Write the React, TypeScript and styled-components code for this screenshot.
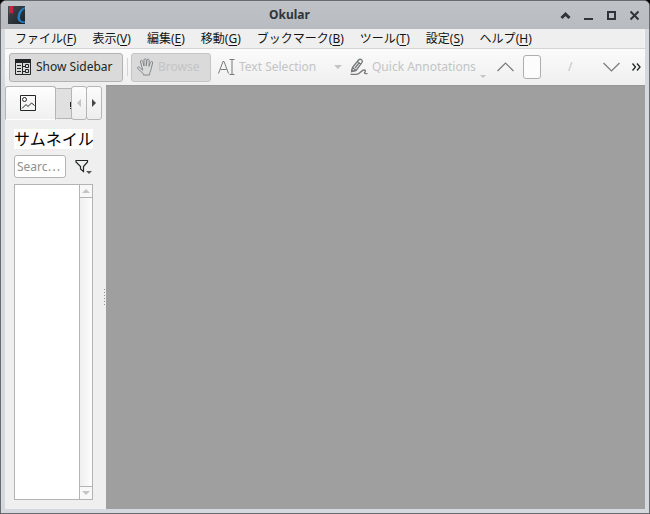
import React from "react";
import styled, { createGlobalStyle, css } from "styled-components";

const Global = createGlobalStyle`
  *, *::before, *::after { box-sizing: border-box; }
  body { margin: 0; background: #000; }
  button, input { font: inherit; color: inherit; margin: 0; padding: 0; }
  svg { display: block; flex: none; }
`;

const Window = styled.div`
  display: flex;
  flex-direction: column;
  min-height: 100vh;
  border: 1px solid #686b70;
  border-radius: 6px 6px 0 0;
  background: #d5d9de;
  overflow: hidden;
  font: 12px/16px "Noto Sans", "Noto Sans CJK JP", sans-serif;
  color: #232627;
`;

const TitleBar = styled.header`
  display: flex;
  align-items: center;
  height: 28px;
  padding: 0 3px 0 7px;
  background: linear-gradient(#bfc3c7, #b8bcc0);
`;

const Title = styled.h1`
  flex: 1;
  margin: 0;
  font-size: 12px;
  line-height: 16px;
  font-weight: 700;
  text-align: center;
  color: #2f343b;
`;

const WindowControls = styled.div`
  display: flex;
  justify-content: flex-end;
`;

const BareButton = styled.button`
  display: flex;
  align-items: center;
  justify-content: center;
  flex: none;
  border: 0;
  background: none;
`;

const ControlButton = styled(BareButton)`
  width: 23px;
  height: 24px;
`;

const Body = styled.div`
  display: flex;
  flex-direction: column;
  flex: 1;
  margin: 0 4px 4px;
  background: #efefef;
`;

const MenuBar = styled.nav`
  display: flex;
  height: 20px;
  padding: 0 2px;
  border-bottom: 1px solid #d4d4d4;
  white-space: nowrap;
`;

const MenuItem = styled(BareButton)`
  height: 19px;
  padding: 0 8px;
  color: #141414;

  u { text-underline-offset: 2px; }
`;

const Toolbar = styled.div`
  display: flex;
  align-items: center;
  height: 36px;
  padding: 0 4px;
  background: linear-gradient(#fbfbfb, #efefef);
  white-space: nowrap;
`;

const ToolButton = styled.button<{ $raised?: boolean }>`
  display: flex;
  align-items: center;
  flex: none;
  gap: 4px;
  height: 29px;
  padding: 0 5px;
  border: 1px solid transparent;
  border-radius: 3px;
  background: none;

  &:disabled { color: #c3c4c5; }

  ${(p) => p.$raised && css`
    border-color: #b3b3b3;
    background: #dadada;
    &:disabled { border-color: #c4c4c4; }
  `}
`;

const SidebarToggle = styled(ToolButton)`
  width: 114px;
`;

const BrowseButton = styled(ToolButton)`
  width: 80px;
`;

const SelectionButton = styled(ToolButton)`
  width: 120px;
  margin-left: 1px;
`;

const DropButton = styled(BareButton)`
  width: 12px;
  height: 29px;
`;

const AnnotationButton = styled(ToolButton)`
  width: 142px;
  margin-right: 11px;

  svg:last-child { align-self: flex-end; margin-bottom: 3px; }
`;

const Separator = styled.div`
  width: 1px;
  height: 18px;
  margin: 0 3px 0 4px;
  background: #d4d4d4;
`;

const PageInput = styled.input`
  width: 18px;
  height: 24px;
  margin: 0 27px 0 9px;
  border: 1px solid #adadad;
  border-radius: 3px;
  background: #fcfcfc;
`;

const PageDivider = styled.span`
  margin-right: 31px;
  color: #c3c4c5;
`;

const MoreButton = styled(BareButton)`
  width: 10px;
  height: 24px;
  margin-left: auto;
`;

const Main = styled.div`
  display: flex;
  flex: 1;
`;

const Sidebar = styled.aside`
  display: flex;
  flex-direction: column;
  flex: none;
  width: 98px;
`;

const Tabs = styled.div`
  display: flex;
  align-items: flex-start;
  height: 35px;
  padding-top: 1px;
`;

const Tab = styled.button<{ $active?: boolean }>`
  display: flex;
  align-items: center;
  justify-content: ${(p) => (p.$active ? "flex-start" : "flex-end")};
  flex: none;
  width: ${(p) => (p.$active ? 51 : 16)}px;
  height: ${(p) => (p.$active ? 34 : 31)}px;
  margin-top: ${(p) => (p.$active ? 0 : 2)}px;
  padding-left: ${(p) => (p.$active ? 14 : 0)}px;
  border: 1px solid #b5b5b5;
  border-bottom-color: ${(p) => (p.$active ? "transparent" : "#b5b5b5")};
  border-left-color: ${(p) => (p.$active ? "#b5b5b5" : "transparent")};
  border-right-width: ${(p) => (p.$active ? 1 : 0)}px;
  border-radius: ${(p) => (p.$active ? "3px 3px 0 0" : "0")};
  background: ${(p) => (p.$active ? "linear-gradient(#fefefe, #f0f0f0)" : "#e0e0e0")};
  overflow: hidden;
`;

const TabScroll = styled(BareButton)`
  width: 16px;
  height: 34px;
  margin-left: -1px;
  border: 1px solid #b5b5b5;
  border-radius: 3px;
  background: linear-gradient(#fcfcfc, #ededed);
`;

const Panel = styled.div`
  display: flex;
  flex-direction: column;
  flex: 1;
  padding: 9px 10px 9px 9px;
`;

const PanelTitle = styled.h2`
  margin: 0 0 6px;
  background: #fff;
  color: #000;
  font-size: 16px;
  line-height: 20px;
  font-weight: 400;
  white-space: nowrap;
`;

const SearchRow = styled.div`
  display: flex;
  align-items: center;
  margin-bottom: 6px;
`;

const SearchInput = styled.input`
  flex: 1;
  min-width: 0;
  height: 23px;
  padding: 0 2px;
  border: 1px solid #b3b3b3;
  border-radius: 3px;
  background: #fff;

  &::placeholder { color: #8f9091; opacity: 1; }
`;

const FilterButton = styled(BareButton)`
  width: 27px;
  height: 23px;
  padding-left: 8px;
`;

const ListFrame = styled.div`
  display: flex;
  flex: 1;
  border: 1px solid #b3b3b3;
  background: #fff;
`;

const ScrollTrack = styled.div`
  display: flex;
  flex-direction: column;
  justify-content: space-between;
  width: 13px;
  margin-left: auto;
  border-left: 1px solid #b3b3b3;
  background: linear-gradient(90deg, #efefef, #fdfdfd);
`;

const ScrollButton = styled(BareButton)<{ $down?: boolean }>`
  width: 12px;
  height: 13px;
  border: 0 solid #b3b3b3;
  border-width: ${(p) => (p.$down ? "1px 0 0" : "0 0 1px")};
  background: #f8f8f8;
`;

const Splitter = styled.div`
  display: flex;
  flex-direction: column;
  align-items: center;
  justify-content: center;
  gap: 2px;
  flex: none;
  width: 3px;
  cursor: col-resize;
`;

const Dot = styled.i`
  width: 1px;
  height: 1px;
  background: #8f8f8f;
`;

const PageView = styled.main`
  flex: 1;
  border-top: 1px solid #979797;
  background: #9f9f9f;
`;

const menus = [
  ["ファイル", "F"],
  ["表示", "V"],
  ["編集", "E"],
  ["移動", "G"],
  ["ブックマーク", "B"],
  ["ツール", "T"],
  ["設定", "S"],
  ["ヘルプ", "H"],
];

const AppIcon = () => (
  <svg width="17" height="18" viewBox="0 0 17 18" aria-hidden="true">
    <defs>
      <linearGradient id="cover" x2="1" y2="1">
        <stop stopColor="#424a50" />
        <stop offset="1" stopColor="#1b2024" />
      </linearGradient>
    </defs>
    <path fill="url(#cover)" d="M0 0h17v18H0z" />
    <path fill="#c82543" d="M1 0h4v8L3 6.500 1 8z" />
    <path fill="#2080cb" d="M17 1c-5 1.500-7.500 6.500-7.500 10.500 0 4 3 5.500 7.500 5.500v-1.500c-3 0-5-1-5-4 0-3.500 1.500-7 5-9z" />
  </svg>
);

const SidebarIcon = () => (
  <svg width="17" height="17" viewBox="0 0 17 17" fill="none" stroke="#232627" aria-hidden="true">
    <path fill="#232627" stroke="none" d="M0 0h16v4H0z" />
    <path d="M.5 3.500v12h15v-12M10.500 5.500h3v3h-3zM10.500 10.500h3v3h-3zM7.500 4v11M7.500 7.500h3M7.500 12.500h3" />
    <path d="M2 6.500h4M2 9.500h4M2 12.500h4" />
  </svg>
);

const HandIcon = () => (
  <svg width="17" height="18" viewBox="0 0 17 18" fill="none" stroke="#85888a" strokeLinecap="round" strokeLinejoin="round" aria-hidden="true">
    <path d="M5 9.500 3.500 4c-.4-2 1.700-2.300 2.200-.6L7 8V2.200C7 .2 9.200.2 9.300 2.200V8l.6-5.600c.2-1.900 2.400-1.600 2.300.2L12 8.300l1.500-4c.7-1.700 2.600-1 2.100.7L14 11.500c-.4 2-1.500 3-1.500 5.500H6.500c0-2.500-2.500-3-5.700-6.300-.9-1.200.6-2.500 1.700-1.400L5.500 12z" />
  </svg>
);

const TextSelectIcon = () => (
  <svg width="17" height="17" viewBox="0 0 17 17" fill="none" stroke="#777a7b" aria-hidden="true">
    <path d="M.5 14.500 5 2.500h1l4.500 12M2.500 10.500h6M11.500.5h5M11.500 15.500h5M14 .5v15" />
  </svg>
);

const PencilIcon = () => (
  <svg width="18" height="18" viewBox="0 0 18 18" fill="none" stroke="#777a7b" strokeWidth="1.300" strokeLinejoin="round" aria-hidden="true">
    <path d="M2.500 9.500 8.500 2q1.500-1.500 3-.2t.2 3L6 12.500l-4.500 1.200zM7.500 3.500l3.200 2.700M2.500 9.500 6 12.500M5 10l4-5" />
    <path fill="#777a7b" stroke="none" d="m1 11 4 2-4 1.500z" />
    <path d="M.5 16.300H6c4 0 5-4 8-4.300 2.500-.2 1 2.400.3 3 .7 1 1.700.8 3.200.6" />
  </svg>
);

const ImageIcon = () => (
  <svg width="16" height="16" viewBox="0 0 16 16" fill="none" stroke="#232627" aria-hidden="true">
    <path d="M.5.5h15v15H.5zM2 13.500l4-4 2 2 3.500-3.500 3 2.500" />
    <circle cx="4.500" cy="4.500" r="2" />
  </svg>
);

const FilterIcon = () => (
  <svg width="17" height="17" viewBox="0 0 17 17" fill="none" stroke="#232627" aria-hidden="true">
    <path strokeWidth="1.200" d="M1 2.500h11.500V4L8.500 8.500v5L5.500 11V8.500L1 4z" />
    <path fill="#555859" stroke="none" d="M11 13h6l-3 3z" />
  </svg>
);

const Chevron = ({ down }: { down?: boolean }) => (
  <svg width="17" height="10" viewBox="0 0 17 10" fill="none" stroke="#777a7b" strokeWidth="1.200" aria-hidden="true">
    <path d={down ? "m.5 1 8 8 8-8" : "m.5 9 8-8 8 8"} />
  </svg>
);

const Triangle = ({ d, fill, width, height }: { d: string; fill: string; width: number; height: number }) => (
  <svg width={width} height={height} viewBox={`0 0 ${width} ${height}`} fill={fill} aria-hidden="true">
    <path d={d} />
  </svg>
);

const controls = [
  { label: "Keep above", d: "m1.500 8 4-4 4 4", stroke: 3 },
  { label: "Minimize", d: "M1 9h9", stroke: 2 },
  { label: "Maximize", d: "M2 2h7v7H2z", stroke: 2 },
  { label: "Close", d: "m1.500 1.500 8 8M9.500 1.500l-8 8", stroke: 2 },
];

export default function App() {
  return (
    <>
      <Global />
      <Window>
        <TitleBar>
          <AppIcon />
          <Title>Okular</Title>
          <WindowControls>
            {controls.map(({ label, d, stroke }) => (
              <ControlButton key={label} aria-label={label}>
                <svg width="11" height="11" viewBox="0 0 11 11" fill="none" stroke="#2f343b" strokeWidth={stroke}>
                  <path d={d} />
                </svg>
              </ControlButton>
            ))}
          </WindowControls>
        </TitleBar>
        <Body>
          <MenuBar>
            {menus.map(([label, key]) => (
              <MenuItem key={key}>
                {label}(<u>{key}</u>)
              </MenuItem>
            ))}
          </MenuBar>
          <Toolbar role="toolbar">
            <SidebarToggle $raised aria-pressed="true">
              <SidebarIcon />
              Show Sidebar
            </SidebarToggle>
            <Separator />
            <BrowseButton $raised disabled>
              <HandIcon />
              Browse
            </BrowseButton>
            <SelectionButton disabled>
              <TextSelectIcon />
              Text Selection
            </SelectionButton>
            <DropButton disabled aria-label="Selection tools">
              <Triangle width={8} height={4} d="M0 0h8L4 4z" fill="#c3c4c5" />
            </DropButton>
            <AnnotationButton disabled>
              <PencilIcon />
              Quick Annotations
              <Triangle width={6} height={3} d="M0 0h6L3 3z" fill="#c3c4c5" />
            </AnnotationButton>
            <BareButton disabled aria-label="Previous page">
              <Chevron />
            </BareButton>
            <PageInput aria-label="Page" />
            <PageDivider>/</PageDivider>
            <BareButton disabled aria-label="Next page">
              <Chevron down />
            </BareButton>
            <MoreButton aria-label="More tools">
              <svg width="9" height="8" viewBox="0 0 9 8" fill="none" stroke="#232627" strokeWidth="1.300">
                <path d="m.5.500 3 3.500-3 3.500M5 .500 8 4 5 7.500" />
              </svg>
            </MoreButton>
          </Toolbar>
          <Main>
            <Sidebar>
              <Tabs>
                <Tab $active aria-label="Thumbnails">
                  <ImageIcon />
                </Tab>
                <Tab aria-label="Bookmarks">
                  <svg width="3" height="12" viewBox="0 0 3 12" fill="#232627">
                    <path d="M1 4h1v5H1zM1 10h2v1H1z" />
                  </svg>
                </Tab>
                <TabScroll disabled aria-label="Scroll tabs left">
                  <Triangle width={4} height={8} d="M4 0v8L0 4z" fill="#c3c4c5" />
                </TabScroll>
                <TabScroll aria-label="Scroll tabs right">
                  <Triangle width={4} height={8} d="M0 0v8l4-4z" fill="#444748" />
                </TabScroll>
              </Tabs>
              <Panel>
                <PanelTitle>サムネイル</PanelTitle>
                <SearchRow>
                  <SearchInput type="text" placeholder="Searc⋯" aria-label="Search" />
                  <FilterButton aria-label="Filter">
                    <FilterIcon />
                  </FilterButton>
                </SearchRow>
                <ListFrame>
                  <ScrollTrack>
                    <ScrollButton disabled aria-label="Scroll up">
                      <Triangle width={8} height={4} d="M0 4h8L4 0z" fill="#c3c4c5" />
                    </ScrollButton>
                    <ScrollButton $down disabled aria-label="Scroll down">
                      <Triangle width={8} height={4} d="M0 0h8L4 4z" fill="#c3c4c5" />
                    </ScrollButton>
                  </ScrollTrack>
                </ListFrame>
              </Panel>
            </Sidebar>
            <Splitter role="separator" aria-orientation="vertical">
              {[0, 1, 2, 3, 4, 5].map((n) => (
                <Dot key={n} />
              ))}
            </Splitter>
            <PageView aria-label="Document" />
          </Main>
        </Body>
      </Window>
    </>
  );
}
